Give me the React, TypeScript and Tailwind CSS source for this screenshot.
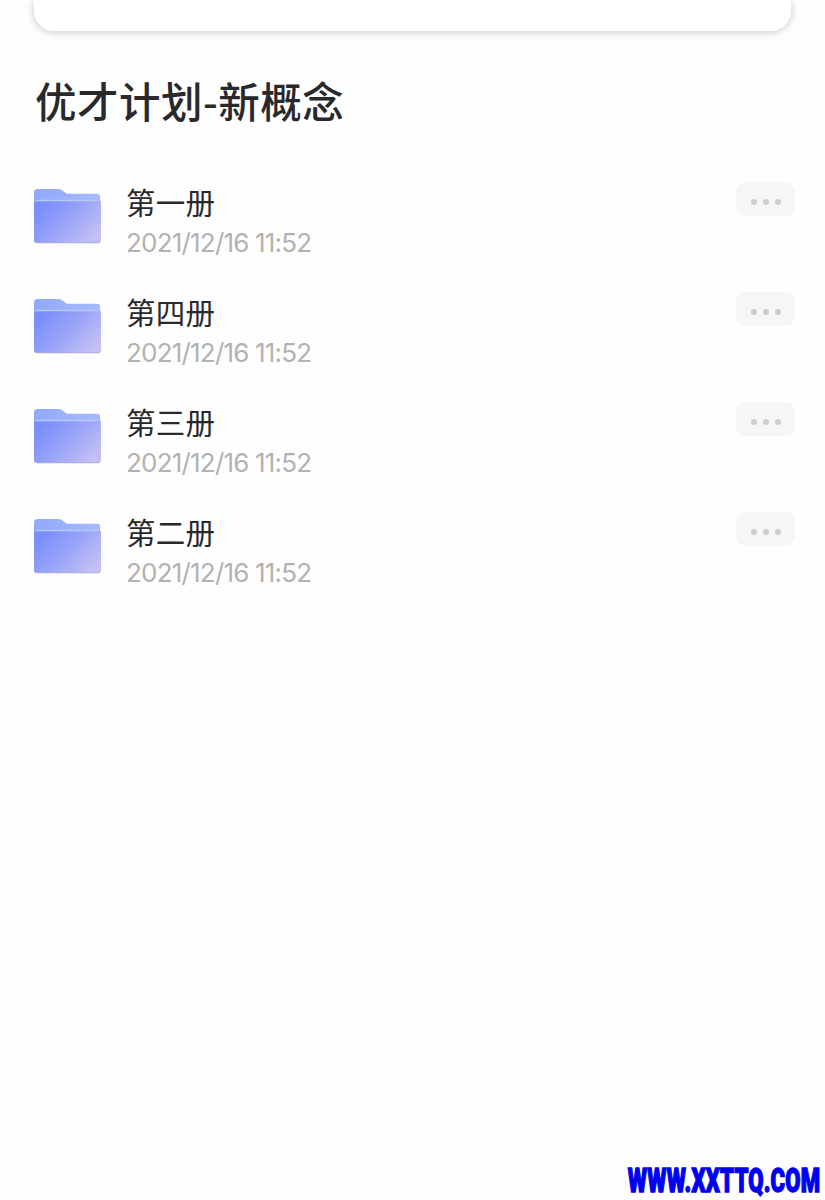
import React from "react";

const folders = [
  { name: "第一册", date: "2021/12/16 11:52" },
  { name: "第四册", date: "2021/12/16 11:52" },
  { name: "第三册", date: "2021/12/16 11:52" },
  { name: "第二册", date: "2021/12/16 11:52" }
];

const FolderIcon: React.FC = () => (
  <svg width="68" height="56" viewBox="0 0 68 56" className="shrink-0">
    <defs>
      <linearGradient id="folderFront" x1="0.1" y1="0.2" x2="1" y2="0.75">
        <stop offset="0" stopColor="#7b8ffc" />
        <stop offset="0.5" stopColor="#9ba5f8" />
        <stop offset="1" stopColor="#c5c0f4" />
      </linearGradient>
      <linearGradient id="folderBack" x1="0" y1="0" x2="1" y2="0">
        <stop offset="0" stopColor="#91a9fb" />
        <stop offset="1" stopColor="#a5bafc" />
      </linearGradient>
    </defs>
    <path
      d="M1 4.500a3.500 3.500 0 0 1 3.500-3.500H24c2.500 0 4 .4 5.500 1.600l2.500 2c1 .8 2.200 1.200 3.500 1.200H64a3 3 0 0 1 3 3V20H1z"
      fill="url(#folderBack)"
    />
    <rect x="1" y="12" width="66.800" height="43.300" rx="3" fill="#a9ace0" />
    <rect x="1" y="12" width="66.800" height="42.300" rx="3" fill="url(#folderFront)" />
    <path d="M2.500 12.500h63" stroke="#b9c8ff" strokeWidth="1.500" />
  </svg>
);

const App: React.FC = () => {
  return (
    <div className="flex h-[1200px] w-[825px] flex-col overflow-hidden bg-[#fefefe] font-['Noto_Sans_CJK_SC',sans-serif] text-[#29292c]">
      {/* Bottom edge of the card above */}
      <div className="ml-[34px] h-[31px] w-[757px] shrink-0 rounded-b-[20px] bg-white shadow-[0_1px_8px_rgba(0,0,0,0.22)]" />

      <h1 className="mt-[39px] pl-[35px] text-[41.5px] leading-[60px] font-medium tracking-[0.5px]">
        优才计划-新概念
      </h1>

      {/* Folder list */}
      <ul className="mt-[49px] flex flex-col pr-[30px] pl-[33px]">
        {folders.map((folder) => (
          <li key={folder.name} className="flex h-[110px] items-start">
            <div className="pt-[9px]">
              <FolderIcon />
            </div>
            <div className="ml-[25px] flex flex-1 flex-col">
              <span className="pt-[2px] text-[29.500px] leading-[40px] tracking-[0.2px]">
                {folder.name}
              </span>
              <span className="pt-[3px] font-[Inter,sans-serif] text-[26px] leading-[38px] font-normal tracking-[-0.8px] text-[#b2b2b2]">
                {folder.date}
              </span>
            </div>
            <button className="mt-[3px] flex h-[34px] w-[59px] items-center justify-center gap-[6px] rounded-[9px] bg-[#f6f6f6] pt-[5px]">
              <span className="size-[6px] rounded-full bg-[#cdcdcd]" />
              <span className="size-[6px] rounded-full bg-[#cdcdcd]" />
              <span className="size-[6px] rounded-full bg-[#cdcdcd]" />
            </button>
          </li>
        ))}
      </ul>

      <footer className="mt-auto flex justify-end pr-[5px]">
        <span className="origin-right scale-x-[0.67] font-[Roboto,sans-serif] text-[33px] leading-[38px] font-black tracking-[0.3px] whitespace-nowrap text-[#0000f0] [-webkit-text-stroke:1.4px_#0000f0]">
          WWW.XXTTQ.COM
        </span>
      </footer>
    </div>
  );
};

export default App;
